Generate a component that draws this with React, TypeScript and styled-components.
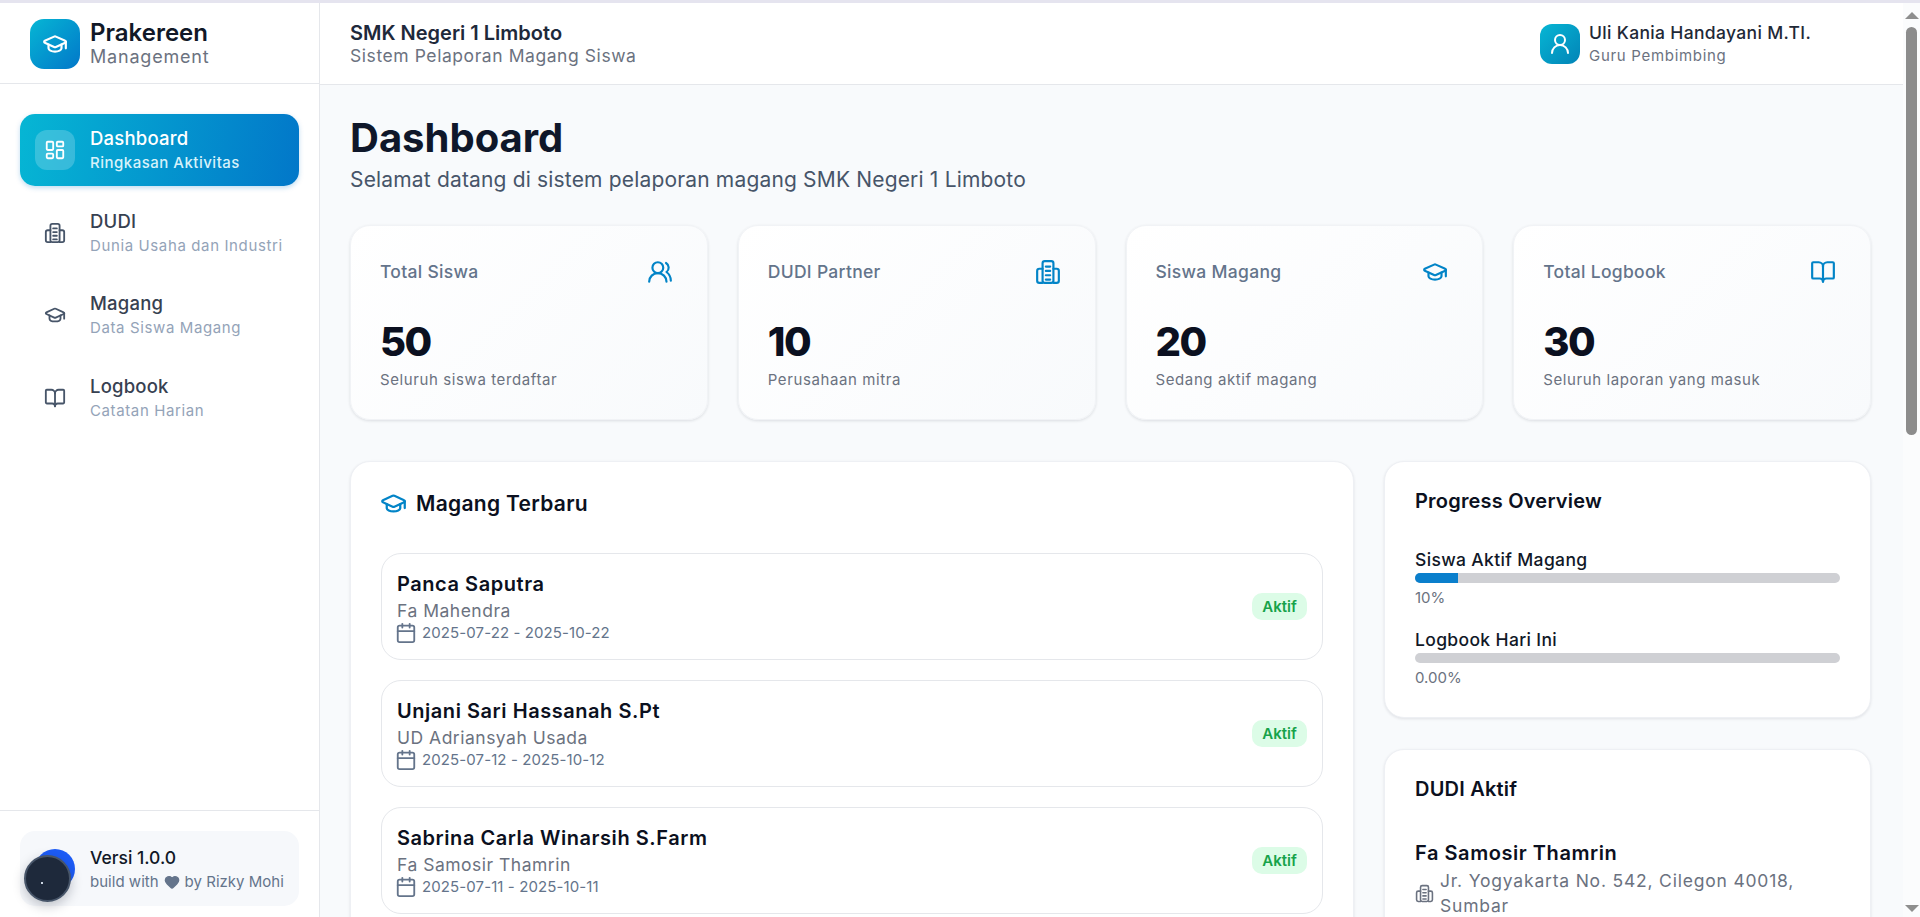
import React from 'react';
import styled, { createGlobalStyle } from 'styled-components';
import { BookOpen, Calendar, GraduationCap, Heart, LayoutDashboard, UserRound, UsersRound } from 'lucide-react';

const GlobalStyle = createGlobalStyle`
  html, body {
    margin: 0;
    padding: 0;
    height: 100%;
    overflow: hidden;
    background: #ffffff;
  }
  * {
    box-sizing: border-box;
  }
  body {
    font-family: Inter, "Noto Sans", "Liberation Sans", sans-serif;
  }
`;

const Page = styled.div`
  height: 100vh;
  display: flex;
  flex-direction: column;
  border-top: 3px solid #e5e4ef;
  position: relative;
`;

const Shell = styled.div`
  flex: 1;
  min-height: 0;
  display: flex;
`;

const Sidebar = styled.aside`
  width: 320px;
  flex-shrink: 0;
  display: flex;
  flex-direction: column;
  background: #ffffff;
  border-right: 1px solid #e5e7eb;
`;

const Brand = styled.div`
  height: 81px;
  flex-shrink: 0;
  display: flex;
  align-items: center;
  gap: 10px;
  padding: 1px 30px 0;
  border-bottom: 1px solid #e5e7eb;
`;

const BrandLogo = styled.div`
  width: 50px;
  height: 50px;
  border-radius: 14px;
  display: flex;
  align-items: center;
  justify-content: center;
  color: #ffffff;
  background: linear-gradient(135deg, #06b6d4, #0277c9);
`;

const BrandText = styled.div`
  display: flex;
  flex-direction: column;
`;

const BrandName = styled.span`
  font-size: 24px;
  line-height: 27px;
  font-weight: 600;
  color: #111827;
`;

const BrandSub = styled.span`
  font-size: 18px;
  line-height: 22px;
  color: #6b7280;
  letter-spacing: 0.8px;
`;

const Nav = styled.nav`
  flex: 1;
  display: flex;
  flex-direction: column;
  gap: 10.5px;
  padding: 30px 20px 0;
`;

const NavItem = styled.div<{ $active?: boolean }>`
  height: 72px;
  display: flex;
  align-items: center;
  gap: 15px;
  padding: 0 15px;
  border-radius: 15px;
  background: ${(p) => (p.$active ? 'linear-gradient(100deg, #06b6d4, #0277c9)' : 'transparent')};
  box-shadow: ${(p) => (p.$active ? '0 2px 5px rgba(2, 119, 201, 0.25)' : 'none')};
`;

const NavIcon = styled.div<{ $active?: boolean }>`
  width: 40px;
  height: 40px;
  border-radius: 12px;
  flex-shrink: 0;
  display: flex;
  align-items: center;
  justify-content: center;
  color: ${(p) => (p.$active ? '#ffffff' : '#475569')};
  background: ${(p) => (p.$active ? 'rgba(255, 255, 255, 0.2)' : 'transparent')};
`;

const NavText = styled.div`
  display: flex;
  flex-direction: column;
`;

const NavTitle = styled.span<{ $active?: boolean }>`
  font-size: 18.5px;
  line-height: 26px;
  font-weight: 500;
  color: ${(p) => (p.$active ? '#ffffff' : '#374151')};
  letter-spacing: 0.2px;
`;

const NavSub = styled.span<{ $active?: boolean }>`
  font-size: 15px;
  line-height: 24px;
  font-weight: ${(p) => (p.$active ? 500 : 400)};
  color: ${(p) => (p.$active ? '#d7f2fa' : '#94a3b8')};
  letter-spacing: ${(p) => (p.$active ? '0.5px' : '0.62px')};
`;

const SideFooter = styled.div`
  flex-shrink: 0;
  padding: 20px 20px 11px;
  border-top: 1px solid #e5e7eb;
`;

const VersionBox = styled.div`
  height: 75px;
  display: flex;
  flex-direction: column;
  justify-content: center;
  padding-left: 70px;
  border-radius: 15px;
  background: #f6f8fb;
`;

const VersionName = styled.span`
  font-size: 17.5px;
  line-height: 26px;
  font-weight: 500;
  color: #111827;
`;

const VersionNote = styled.span`
  display: flex;
  align-items: center;
  gap: 5px;
  font-size: 15px;
  line-height: 21px;
  color: #64748b;
  letter-spacing: 0.02px;
`;

const BlueOrb = styled.div`
  position: absolute;
  left: 35px;
  top: 846px;
  width: 40px;
  height: 40px;
  border-radius: 50%;
  background: #1d5cf6;
`;

const DarkOrb = styled.div`
  position: absolute;
  left: 24px;
  top: 852px;
  width: 47px;
  height: 47px;
  border-radius: 50%;
  background: #1e293b;
  border: 2px solid #475569;
  box-shadow: 0 4px 12px rgba(15, 23, 42, 0.25);

  &::after {
    content: '';
    position: absolute;
    left: 15px;
    top: 25px;
    width: 2px;
    height: 2px;
    background: #cbd5e1;
  }
`;

const Main = styled.main`
  flex: 1;
  min-width: 0;
  display: flex;
  flex-direction: column;
  background: #f8fafc;
`;

const TopBar = styled.header`
  height: 82px;
  flex-shrink: 0;
  display: flex;
  align-items: center;
  justify-content: space-between;
  padding: 0 29px 0 30px;
  background: #ffffff;
  border-bottom: 1px solid #e5e7eb;
`;

const SchoolBlock = styled.div`
  display: flex;
  flex-direction: column;
`;

const SchoolName = styled.span`
  font-size: 20px;
  line-height: 24px;
  font-weight: 600;
  color: #1e293b;
`;

const SchoolSub = styled.span`
  font-size: 17.5px;
  line-height: 22px;
  color: #6b7280;
  letter-spacing: 0.57px;
`;

const UserBlock = styled.div`
  display: flex;
  align-items: center;
  gap: 9px;
  min-width: 334px;
`;

const UserAvatar = styled.div`
  width: 40px;
  height: 40px;
  border-radius: 12px;
  display: flex;
  align-items: center;
  justify-content: center;
  color: #ffffff;
  background: linear-gradient(135deg, #06b6d4, #0284b7);
`;

const UserText = styled.div`
  display: flex;
  flex-direction: column;
`;

const UserName = styled.span`
  font-size: 17.5px;
  line-height: 24px;
  font-weight: 500;
  color: #1f2937;
  letter-spacing: 0.34px;
`;

const UserRole = styled.span`
  font-size: 15px;
  line-height: 21px;
  color: #6b7280;
  letter-spacing: 0.7px;
`;

const Content = styled.div`
  flex: 1;
  min-height: 0;
  overflow: hidden;
  padding: 30px 32px 0 30px;
`;

const PageTitle = styled.h1`
  margin: 0;
  font-size: 40px;
  line-height: 45px;
  font-weight: 700;
  color: #0f172a;
`;

const PageSub = styled.p`
  margin: 5px 0 30px;
  font-size: 21px;
  line-height: 30px;
  color: #475569;
  letter-spacing: 0.17px;
`;

const StatGrid = styled.div`
  display: grid;
  grid-template-columns: repeat(4, 1fr);
  gap: 30px;
  margin-bottom: 41px;
`;

const StatCard = styled.div`
  height: 195px;
  padding: 28px 29px 0;
  border-radius: 20px;
  border: 1px solid #f1f3f6;
  background: linear-gradient(135deg, #ffffff, #f8fafc);
  box-shadow: 0 1px 3px rgba(15, 23, 42, 0.12);
`;

const StatHead = styled.div`
  height: 35px;
  display: flex;
  align-items: center;
  justify-content: space-between;
  padding-right: 5px;
  margin-bottom: 28px;
  color: #0284c7;
`;

const StatLabel = styled.span`
  font-size: 17.5px;
  font-weight: 500;
  color: #64748b;
  letter-spacing: 0.3px;
`;

const StatValue = styled.div`
  font-size: 40px;
  line-height: 50px;
  font-weight: 800;
  color: #0b1020;
  letter-spacing: -1.5px;
`;

const StatNote = styled.div`
  margin-top: 2px;
  font-size: 15px;
  line-height: 22px;
  color: #6b7280;
  letter-spacing: 0.6px;
`;

const Columns = styled.div`
  display: grid;
  grid-template-columns: repeat(3, 1fr);
  gap: 30px;
  align-items: start;
`;

const Panel = styled.section<{ $wide?: boolean }>`
  grid-column: ${(p) => (p.$wide ? 'span 2' : 'auto')};
  padding: ${(p) => (p.$wide ? '27px' : '25px')} 30px 29px;
  border-radius: 20px;
  border: 1px solid #eef0f4;
  background: #ffffff;
  box-shadow: 0 1px 3px rgba(15, 23, 42, 0.1);
`;

const SideColumn = styled.div`
  display: flex;
  flex-direction: column;
  gap: 31px;
`;

const PanelHead = styled.h2`
  margin: 0;
  display: flex;
  align-items: center;
  gap: 11px;
  height: 28px;
  font-size: 20px;
  font-weight: 600;
  color: #0b1020;
  letter-spacing: 0.2px;

  svg {
    color: #0284c7;
  }
`;

const WidePanelHead = styled(PanelHead)`
  gap: 9px;
  font-size: 21px;
  letter-spacing: 0.3px;

  svg {
    margin-left: -1px;
  }
`;

const InternList = styled.div`
  display: flex;
  flex-direction: column;
  gap: 20px;
  margin-top: 36px;
`;

const InternRow = styled.div`
  height: 107px;
  flex-shrink: 0;
  display: flex;
  align-items: center;
  justify-content: space-between;
  padding: 0 15px;
  border-radius: 20px;
  border: 1px solid #e5e7eb;
`;

const InternName = styled.div`
  font-size: 20px;
  line-height: 30px;
  font-weight: 600;
  color: #0b1020;
  letter-spacing: 0.55px;
`;

const InternCompany = styled.div`
  margin-top: 1px;
  font-size: 17.5px;
  line-height: 22px;
  color: #6b7280;
  letter-spacing: 0.5px;
`;

const InternDate = styled.div`
  display: flex;
  align-items: center;
  gap: 5px;
  height: 22px;
  font-size: 15px;
  line-height: 22px;
  color: #64748b;
  letter-spacing: 0.1px;

  svg {
    margin-left: -2px;
  }
`;

const Badge = styled.span`
  width: 55px;
  height: 27px;
  display: flex;
  align-items: center;
  justify-content: center;
  border-radius: 10px;
  font-size: 15px;
  font-weight: 600;
  color: #16a34a;
  background: #dcfce7;
`;

const ProgressLabel = styled.div<{ $first?: boolean }>`
  margin-top: ${(p) => (p.$first ? '33px' : '20px')};
  font-size: 17.5px;
  line-height: 24px;
  font-weight: 500;
  color: #111827;
  letter-spacing: 0.35px;
`;

const ProgressTrack = styled.div`
  height: 10px;
  margin-top: 1px;
  border-radius: 5px;
  overflow: hidden;
  background: #cfd0d4;
`;

const ProgressFill = styled.div`
  height: 100%;
  background: #0a7fcc;
`;

const ProgressValue = styled.div`
  margin-top: 5px;
  font-size: 15px;
  line-height: 20px;
  color: #6b7280;
`;

const DudiName = styled.div`
  margin-top: 35px;
  font-size: 20px;
  line-height: 30px;
  font-weight: 600;
  color: #0b1020;
  letter-spacing: 0.55px;
`;

const DudiAddress = styled.div`
  display: flex;
  align-items: center;
  gap: 6px;
  max-width: 380px;
  font-size: 17.5px;
  line-height: 25px;
  color: #6b7280;
  letter-spacing: 0.8px;

  svg {
    flex-shrink: 0;
  }
`;

const ScrollRail = styled.div`
  width: 17px;
  flex-shrink: 0;
  display: flex;
  flex-direction: column;
  align-items: center;
  padding: 9px 0 5px;
  background: #fbfcfd;
`;

const ScrollArrow = styled.div<{ $down?: boolean }>`
  width: 0;
  height: 0;
  border-left: 7px solid transparent;
  border-right: 7px solid transparent;
  border-bottom: ${(p) => (p.$down ? '0' : '7px solid #8e8e8e')};
  border-top: ${(p) => (p.$down ? '7px solid #8e8e8e' : '0')};
  margin-top: ${(p) => (p.$down ? 'auto' : '0')};
`;

const ScrollThumb = styled.div`
  width: 11px;
  height: 408px;
  margin-top: 8px;
  border-radius: 6px;
  background: #8c8c8c;
`;

function BuildingIcon({ size }: { size: number }) {
	return (
		<svg width={size} height={size} viewBox="0 0 24 24" fill="none" stroke="currentColor" strokeWidth="2" strokeLinecap="round" strokeLinejoin="round">
			<rect x="7" y="2" width="10" height="20" rx="2" />
			<path d="M7 9H4a2 2 0 0 0-2 2v9a2 2 0 0 0 2 2h3" />
			<path d="M17 9h3a2 2 0 0 1 2 2v9a2 2 0 0 1-2 2h-3" />
			<path d="M10 7h4" />
			<path d="M10 11h4" />
			<path d="M10 15h4" />
			<path d="M10 19h4" />
		</svg>
	);
}

const navItems = [
	{ title: 'Dashboard', sub: 'Ringkasan Aktivitas', icon: <LayoutDashboard size={22} />, active: true },
	{ title: 'DUDI', sub: 'Dunia Usaha dan Industri', icon: <BuildingIcon size={22} /> },
	{ title: 'Magang', sub: 'Data Siswa Magang', icon: <GraduationCap size={22} /> },
	{ title: 'Logbook', sub: 'Catatan Harian', icon: <BookOpen size={22} /> },
];

const stats = [
	{ label: 'Total Siswa', value: '50', note: 'Seluruh siswa terdaftar', icon: <UsersRound size={26} /> },
	{ label: 'DUDI Partner', value: '10', note: 'Perusahaan mitra', icon: <BuildingIcon size={26} /> },
	{ label: 'Siswa Magang', value: '20', note: 'Sedang aktif magang', icon: <GraduationCap size={26} /> },
	{ label: 'Total Logbook', value: '30', note: 'Seluruh laporan yang masuk', icon: <BookOpen size={26} /> },
];

const interns = [
	{ name: 'Panca Saputra', company: 'Fa Mahendra', dates: '2025-07-22 - 2025-10-22' },
	{ name: 'Unjani Sari Hassanah S.Pt', company: 'UD Adriansyah Usada', dates: '2025-07-12 - 2025-10-12' },
	{ name: 'Sabrina Carla Winarsih S.Farm', company: 'Fa Samosir Thamrin', dates: '2025-07-11 - 2025-10-11' },
];

export default function App() {
	return (
		<>
			<GlobalStyle />
			<Page>
				<Shell>
					<Sidebar>
						<Brand>
							<BrandLogo>
								<GraduationCap size={26} />
							</BrandLogo>
							<BrandText>
								<BrandName>Prakereen</BrandName>
								<BrandSub>Management</BrandSub>
							</BrandText>
						</Brand>
						<Nav>
							{navItems.map((item) => (
								<NavItem key={item.title} $active={item.active}>
									<NavIcon $active={item.active}>{item.icon}</NavIcon>
									<NavText>
										<NavTitle $active={item.active}>{item.title}</NavTitle>
										<NavSub $active={item.active}>{item.sub}</NavSub>
									</NavText>
								</NavItem>
							))}
						</Nav>
						<SideFooter>
							<VersionBox>
								<VersionName>Versi 1.0.0</VersionName>
								<VersionNote>
									build with <Heart size={16} fill="currentColor" /> by Rizky Mohi
								</VersionNote>
							</VersionBox>
						</SideFooter>
					</Sidebar>
					<Main>
						<TopBar>
							<SchoolBlock>
								<SchoolName>SMK Negeri 1 Limboto</SchoolName>
								<SchoolSub>Sistem Pelaporan Magang Siswa</SchoolSub>
							</SchoolBlock>
							<UserBlock>
								<UserAvatar>
									<UserRound size={24} />
								</UserAvatar>
								<UserText>
									<UserName>Uli Kania Handayani M.TI.</UserName>
									<UserRole>Guru Pembimbing</UserRole>
								</UserText>
							</UserBlock>
						</TopBar>
						<Content>
							<PageTitle>Dashboard</PageTitle>
							<PageSub>Selamat datang di sistem pelaporan magang SMK Negeri 1 Limboto</PageSub>
							<StatGrid>
								{stats.map((stat) => (
									<StatCard key={stat.label}>
										<StatHead>
											<StatLabel>{stat.label}</StatLabel>
											{stat.icon}
										</StatHead>
										<StatValue>{stat.value}</StatValue>
										<StatNote>{stat.note}</StatNote>
									</StatCard>
								))}
							</StatGrid>
							<Columns>
								<Panel $wide>
									<WidePanelHead>
										<GraduationCap size={27} />
										Magang Terbaru
									</WidePanelHead>
									<InternList>
										{interns.map((intern) => (
											<InternRow key={intern.name}>
												<div>
													<InternName>{intern.name}</InternName>
													<InternCompany>{intern.company}</InternCompany>
													<InternDate>
														<Calendar size={22} />
														{intern.dates}
													</InternDate>
												</div>
												<Badge>Aktif</Badge>
											</InternRow>
										))}
									</InternList>
								</Panel>
								<SideColumn>
									<Panel>
										<PanelHead>Progress Overview</PanelHead>
										<ProgressLabel $first>Siswa Aktif Magang</ProgressLabel>
										<ProgressTrack>
											<ProgressFill style={{ width: '10%' }} />
										</ProgressTrack>
										<ProgressValue>10%</ProgressValue>
										<ProgressLabel>Logbook Hari Ini</ProgressLabel>
										<ProgressTrack>
											<ProgressFill style={{ width: '0%' }} />
										</ProgressTrack>
										<ProgressValue>0.00%</ProgressValue>
									</Panel>
									<Panel>
										<PanelHead>DUDI Aktif</PanelHead>
										<DudiName>Fa Samosir Thamrin</DudiName>
										<DudiAddress>
											<BuildingIcon size={19} />
											<span>Jr. Yogyakarta No. 542, Cilegon 40018, Sumbar</span>
										</DudiAddress>
									</Panel>
								</SideColumn>
							</Columns>
						</Content>
					</Main>
					<ScrollRail aria-hidden>
						<ScrollArrow />
						<ScrollThumb />
						<ScrollArrow $down />
					</ScrollRail>
				</Shell>
				<BlueOrb />
				<DarkOrb />
			</Page>
		</>
	);
}
